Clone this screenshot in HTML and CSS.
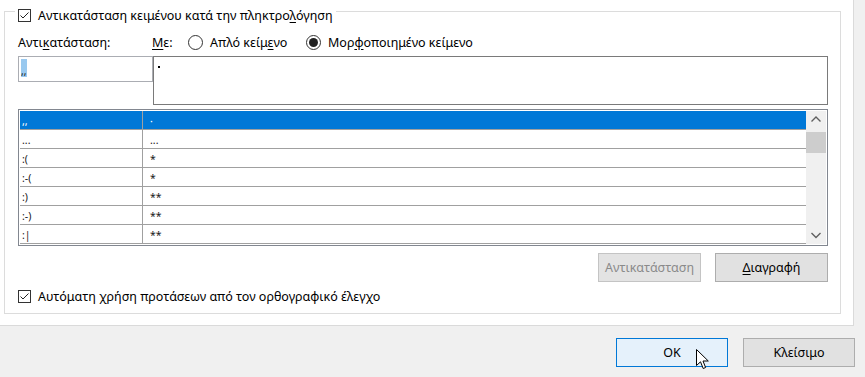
FILE: index.html
```html
<!DOCTYPE html>
<html lang="el">
<head>
  <meta charset="UTF-8">
  <title>Αυτόματη Διόρθωση</title>
  <link rel="stylesheet" href="styles.css">
</head>
<body>
  <div class="panel">
    <div class="group">
      <div class="legend">
        <span class="check">
          <svg width="11" height="11" viewBox="0 0 11 11"><path d="M1.5 5.5 L4 8 L9.5 2.5" fill="none" stroke="#222" stroke-width="1"/></svg>
        </span>
        <span>Αντικατάσταση κειμένου κατά την πληκτρο<u>λ</u>όγηση</span>
      </div>

      <div class="labels">
        <span class="lbl-replace">Αντι<u>κ</u>ατάσταση:</span>
        <span class="lbl-with"><u>Μ</u>ε:</span>
        <span class="opt opt-plain"><span class="radio"></span><span>Απλό κείμ<u>ε</u>νο</span></span>
        <span class="opt"><span class="radio on"></span><span>Μορ<u>φ</u>οποιημένο κείμενο</span></span>
      </div>

      <div class="inputs">
        <div class="field"><span class="sel">,,</span></div>
        <div class="area"><span class="dot"></span></div>
      </div>

      <div class="list">
        <div class="rows">
          <div class="row active"><span class="c1">,,</span><span class="c2">·</span></div>
          <div class="row"><span class="c1">...</span><span class="c2">...</span></div>
          <div class="row"><span class="c1">:(</span><span class="c2">*</span></div>
          <div class="row"><span class="c1">:-(</span><span class="c2">*</span></div>
          <div class="row"><span class="c1">:)</span><span class="c2">**</span></div>
          <div class="row"><span class="c1">:-)</span><span class="c2">**</span></div>
          <div class="row"><span class="c1">:|</span><span class="c2">**</span></div>
        </div>
        <div class="scrollbar">
          <svg class="arrow" width="20" height="17" viewBox="0 0 20 17"><path d="M5.5 10.5 L10 6 L14.5 10.5" fill="none" stroke="#606060" stroke-width="1.4"/></svg>
          <div class="thumb"></div>
          <div class="track"></div>
          <svg class="arrow" width="20" height="17" viewBox="0 0 20 17"><path d="M5.5 6 L10 10.5 L14.5 6" fill="none" stroke="#606060" stroke-width="1.4"/></svg>
        </div>
      </div>

      <div class="actions">
        <button class="btn" disabled>Αντικατάσταση</button>
        <button class="btn wide"><u>Δ</u>ιαγραφή</button>
      </div>

      <div class="legend plain">
        <span class="check">
          <svg width="11" height="11" viewBox="0 0 11 11"><path d="M1.5 5.5 L4 8 L9.5 2.5" fill="none" stroke="#222" stroke-width="1"/></svg>
        </span>
        <span>Αυτόματη <u>χ</u>ρήση προτάσεων από τον ορθογραφικό έλεγχο</span>
      </div>
    </div>
  </div>

  <div class="footer">
    <button class="btn big default">OK</button>
    <button class="btn big">Κλείσιμο</button>
    <svg class="cursor" width="14" height="22" viewBox="0 0 14 22"><path d="M0.5 0.5 L0.5 16.5 L4.5 12.8 L7.2 19.5 L9.6 18.5 L7 12 L12.3 12 Z" fill="#fff" stroke="#000" stroke-width="1"/></svg>
  </div>
</body>
</html>
```

FILE: styles.css
```css
* {
  margin: 0;
  padding: 0;
  box-sizing: border-box;
}

body {
  font-family: "Noto Sans", "Open Sans", sans-serif;
  font-size: 12.5px;
  color: #000;
  background-color: #f0f0f0;
  width: 865px;
  height: 377px;
  overflow: hidden;
  position: relative;
}

u {
  text-underline-offset: 2px;
}

.panel {
  width: 854px;
  height: 326px;
  background: #fff;
  border-right: 1px solid #dadada;
  border-bottom: 1px solid #dadada;
  padding: 11px 0 0 4px;
}

.group {
  width: 837px;
  height: 303px;
  border: 1px solid #dcdcdc;
  padding: 0 12px 0 13px;
  display: flex;
  flex-direction: column;
}

.legend {
  display: flex;
  align-items: center;
  gap: 7px;
  height: 14px;
  margin-top: -4px;
  margin-left: -3px;
  padding: 0 3px;
  background: #fff;
  align-self: flex-start;
  white-space: nowrap;
}

.legend.plain {
  margin-top: 7px;
}

.check {
  width: 13px;
  height: 13px;
  border: 1px solid #333;
  display: flex;
  align-items: center;
  justify-content: center;
  flex-shrink: 0;
}

.labels {
  display: flex;
  align-items: center;
  height: 16px;
  margin-top: 12px;
  white-space: nowrap;
}

.lbl-replace {
  width: 134px;
}

.lbl-with {
  width: 36px;
}

.opt {
  display: flex;
  align-items: center;
  gap: 7px;
}

.opt-plain {
  width: 118px;
}

.radio {
  width: 15px;
  height: 15px;
  border: 1px solid #333;
  border-radius: 50%;
  display: flex;
  align-items: center;
  justify-content: center;
  flex-shrink: 0;
}

.radio.on::after {
  content: "";
  width: 9px;
  height: 9px;
  border-radius: 50%;
  background: #222;
}

.inputs {
  display: flex;
  margin-top: 6px;
}

.field {
  width: 135px;
  height: 26px;
  border: 1px solid #abadb3;
  padding: 2px 0 0 2px;
}

.sel {
  display: block;
  width: 6px;
  height: 18px;
  background: #99c9ef;
  font-size: 10px;
  line-height: 24px;
  color: #1a1a1a;
  overflow: hidden;
}

.area {
  width: 675px;
  height: 49px;
  border: 1px solid #7a7a7a;
  padding: 9px 0 0 4px;
}

.dot {
  display: block;
  width: 2px;
  height: 2px;
  background: #000;
}

.list {
  display: flex;
  height: 137px;
  margin-top: 4px;
  border: 1px solid #828790;
  padding: 1px;
}

.rows {
  flex: 1;
}

.row {
  display: flex;
  height: 19px;
  border-bottom: 1px solid #a0a0a0;
  font-size: 10.5px;
  line-height: 20px;
  color: #1a1a1a;
}

.row.active {
  background: #0078d7;
  color: #fff;
}

.c1 {
  width: 123px;
  border-right: 1px solid #a0a0a0;
  padding-left: 2px;
}

.c2 {
  padding-left: 7px;
}

.scrollbar {
  width: 20px;
  background: #f0f0f0;
  display: flex;
  flex-direction: column;
}

.arrow {
  display: block;
  flex-shrink: 0;
}

.thumb {
  height: 21px;
  background: #cdcdcd;
  margin-top: 4px;
}

.track {
  flex: 1;
}

.actions {
  display: flex;
  justify-content: flex-end;
  gap: 14px;
  margin-top: 7px;
}

.btn {
  font-family: inherit;
  font-size: 12.5px;
  color: #000;
  width: 103px;
  height: 29px;
  background: #e1e1e1;
  border: 1px solid #adadad;
}

.btn:disabled {
  color: #8a8a8a;
  background: #e3e3e3;
  border-color: #c4c4c4;
}

.btn.wide {
  width: 113px;
}

.footer {
  display: flex;
  justify-content: flex-end;
  gap: 15px;
  margin-top: 12px;
  padding-right: 10px;
}

.btn.big {
  width: 112px;
}

.btn.default {
  background: #e5f1fb;
  border-color: #0078d7;
}

.cursor {
  position: absolute;
  left: 696px;
  top: 349px;
}
```
